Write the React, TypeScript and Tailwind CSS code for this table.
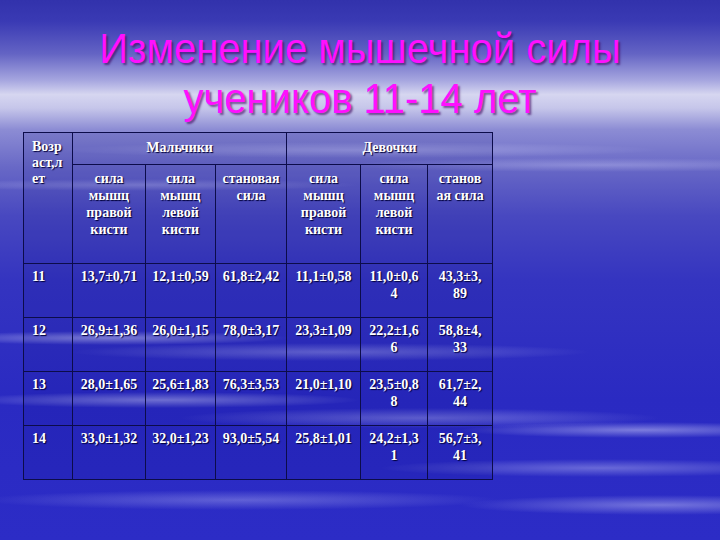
const rows: { age: string; cells: string[][] }[] = [
  {
    age: '11',
    cells: [['13,7±0,71'], ['12,1±0,59'], ['61,8±2,42'], ['11,1±0,58'], ['11,0±0,6', '4'], ['43,3±3,', '89']],
  },
  {
    age: '12',
    cells: [['26,9±1,36'], ['26,0±1,15'], ['78,0±3,17'], ['23,3±1,09'], ['22,2±1,6', '6'], ['58,8±4,', '33']],
  },
  {
    age: '13',
    cells: [['28,0±1,65'], ['25,6±1,83'], ['76,3±3,53'], ['21,0±1,10'], ['23,5±0,8', '8'], ['61,7±2,', '44']],
  },
  {
    age: '14',
    cells: [['33,0±1,32'], ['32,0±1,23'], ['93,0±5,54'], ['25,8±1,01'], ['24,2±1,3', '1'], ['56,7±3,', '41']],
  },
]

const subHeads: string[][] = [
  ['сила', 'мышц', 'правой', 'кисти'],
  ['сила', 'мышц', 'левой', 'кисти'],
  ['становая', 'сила'],
  ['сила', 'мышц', 'правой', 'кисти'],
  ['сила', 'мышц', 'левой', 'кисти'],
  ['станов', 'ая сила'],
]

function Lines({ lines }: { lines: string[] }) {
  return (
    <>
      {lines.map((l, i) => (
        <div key={i} className="whitespace-nowrap">
          {l}
        </div>
      ))}
    </>
  )
}

const cell = 'border border-[#0c0c4a] align-top text-center'

export default function App() {
  return (
    <div className="relative w-[720px] h-[540px] overflow-hidden bg-[radial-gradient(ellipse_180px_7px_at_110px_338px,rgba(225,225,255,0.5),transparent),radial-gradient(ellipse_260px_9px_at_330px_352px,rgba(220,220,255,0.35),transparent),radial-gradient(ellipse_200px_8px_at_160px_400px,rgba(225,225,255,0.45),transparent),radial-gradient(ellipse_240px_10px_at_420px_418px,rgba(220,220,255,0.35),transparent),radial-gradient(ellipse_180px_8px_at_640px_430px,rgba(225,225,255,0.45),transparent),radial-gradient(ellipse_220px_9px_at_600px_468px,rgba(220,220,255,0.35),transparent),radial-gradient(ellipse_260px_10px_at_240px_500px,rgba(220,220,255,0.3),transparent),radial-gradient(ellipse_200px_10px_at_660px_505px,rgba(225,225,255,0.4),transparent),radial-gradient(ellipse_300px_8px_at_360px_150px,rgba(220,220,255,0.35),transparent),radial-gradient(ellipse_260px_7px_at_600px_165px,rgba(220,220,255,0.3),transparent),radial-gradient(ellipse_220px_6px_at_140px_185px,rgba(220,220,255,0.3),transparent),linear-gradient(180deg,#3232ac_0%,#3a3ab4_4%,#6464c4_10%,#a8a8e0_15%,#d6d6f0_17.5%,#c6c6ea_20%,#8c8cd4_24%,#6868c6_31%,#4848c0_40%,#3434c0_52%,#2a2ac2_74%,#2c2cc6_100%)]">
      <div className="pt-[23px] text-center font-['Liberation_Sans',Arial,sans-serif] text-[40px] leading-[50px] text-[#ff10ff] [text-shadow:2px_2px_2px_rgba(60,0,90,0.6)]">
        <div className="scale-y-[1.06]">Изменение мышечной силы</div>
        <div className="scale-y-[1.06]">учеников 11-14 лет</div>
      </div>

      <table className="ml-[23px] mt-[9px] w-[469px] table-fixed border-collapse bg-[rgba(10,10,120,0.12)] font-['Liberation_Serif','Times_New_Roman',serif] text-[14px] font-bold leading-[17px] text-white [text-shadow:1px_1px_1px_#00003a]">
        <colgroup>
          <col className="w-[49px]" />
          <col className="w-[73px]" />
          <col className="w-[70px]" />
          <col className="w-[71px]" />
          <col className="w-[74px]" />
          <col className="w-[67px]" />
          <col className="w-[65px]" />
        </colgroup>
        <tbody>
          <tr className="h-[32px]">
            <td rowSpan={2} className="border border-[#0c0c4a] align-top pl-[8px] pt-[6px] text-left leading-[16px]">
              <Lines lines={['Возр', 'аст,л', 'ет']} />
            </td>
            <td colSpan={3} className={`${cell} pt-[6px]`}>
              Мальчики
            </td>
            <td colSpan={3} className={`${cell} pt-[6px]`}>
              Девочки
            </td>
          </tr>
          <tr className="h-[99px]">
            {subHeads.map((h, i) => (
              <td key={i} className={`${cell} pt-[5px]`}>
                <Lines lines={h} />
              </td>
            ))}
          </tr>
          {rows.map((r) => (
            <tr key={r.age} className="h-[54px]">
              <td className="border border-[#0c0c4a] align-top pl-[8px] pt-[4px] text-left">{r.age}</td>
              {r.cells.map((c, i) => (
                <td key={i} className={`${cell} pt-[4px]`}>
                  <Lines lines={c} />
                </td>
              ))}
            </tr>
          ))}
        </tbody>
      </table>
    </div>
  )
}
